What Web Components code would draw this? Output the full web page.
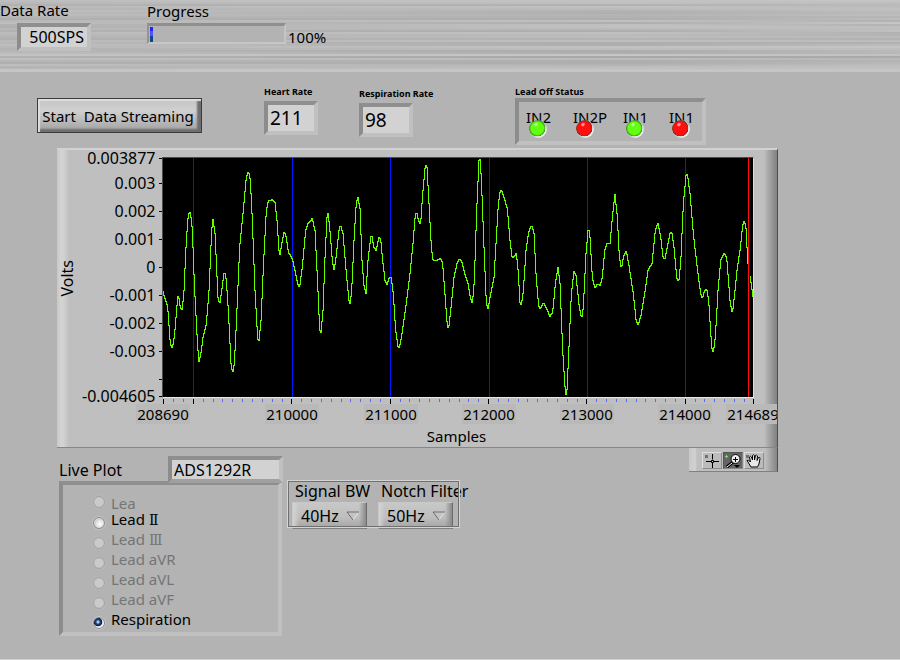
<!DOCTYPE html>
<html lang="en">
<head>
<meta charset="utf-8">
<title>ECG Live Plot</title>
<style>
html, body { margin: 0; }
body { background: #b3b3b3; color: #000; font: 15px/20px "Noto Sans", "Open Sans", "Noto Sans CJK SC", sans-serif; }
</style>
</head>
<body>
<ecg-app></ecg-app>
<script>
function define(name, html, setup) {
  customElements.define(name, class extends HTMLElement {
    constructor() {
      super();
      const t = document.createElement('template');
      t.innerHTML = '<style>*{box-sizing:border-box}</style>' + html;
      this.attachShadow({ mode: 'open' }).append(t.content.cloneNode(true));
    }
    connectedCallback() {
      if (setup && !this.ready) { this.ready = true; setup(this, this.shadowRoot); }
    }
  });
}

define('sunken-box', `<style>
:host { display: block; box-sizing: border-box; border: solid; border-width: 4px 4px 4px 4px;
  border-color: #8f8f8f #c0c0c0 #c0c0c0 #8c8c8c; background: var(--fill, #d2d2d2); }
</style><slot></slot>`);

define('brushed-header', `<style>
:host { display: flex; align-items: flex-start; height: 72px; box-sizing: border-box; border-bottom: 3px solid #c5c5c5; }
</style><slot></slot>`, host => {
  const rows = [
    [190,194,196],[184,192,190],[178,178,186],[186,192,188],[182,188,192],[190,178,190],[186,176,186],[188,180,190],
    [182,178,182],[176,174,188],[184,192,178],[190,174,198],[178,192,180],[176,194,190],[184,186,190],[178,174,192],
    [188,192,178],[184,186,180],[180,188,186],[176,180,178],[186,190,188],[184,174,178],[190,174,188],[184,194,196],
    [178,190,190],[182,172,186],[188,174,184],[194,198,194],[178,168,170],[190,188,184],[182,174,180],[176,174,184],
    [190,180,188],[180,190,192],[184,192,192]];
  const g = v => `rgb(${v},${v},${v})`;
  host.style.backgroundImage = rows.map(r => `linear-gradient(90deg,${g(r[0])},${g(r[1])} 70%,${g(r[2])})`).join();
  host.style.backgroundPosition = rows.map((r, i) => `0 ${i * 2}px`).join();
  host.style.backgroundSize = '100% 2px';
  host.style.backgroundRepeat = 'no-repeat';
});

define('top-bar', `<style>
:host { display: block; }
.rate { width: 91px; }
.rate sunken-box { margin: 3px 0 0 17px; height: 28px; text-align: right; padding-right: 3px; font-size: 16px; }
.prog { margin-left: 56px; padding-top: 1px; }
.line { display: flex; gap: 2px; }
progress { appearance: none; display: block; width: 139px; height: 21px; margin-top: 2px; padding: 1px 0 0 0;
  border: solid; border-width: 3px 2px 2px; border-color: #8f8f8f #c4c4c4 #c6c6c6 #939393; background: #b3b3b3; }
progress::-webkit-progress-bar { background: transparent; }
progress::-webkit-progress-value { background: linear-gradient(#2222ff 0 30%, #5050ff 30% 60%, #114488 60%);
  margin-left: 1px; height: 14px; }
output { padding-top: 6px; }
</style>
<brushed-header>
  <div class="rate"><label id="dr">Data Rate</label><sunken-box><output aria-labelledby="dr">500SPS</output></sunken-box></div>
  <div class="prog"><label for="p">Progress</label>
    <div class="line"><progress id="p" max="100" value="2"></progress><output>100%</output></div></div>
</brushed-header>`);

define('value-readout', `<style>
:host { display: block; }
.name { display: block; font-size: 9px; font-weight: 700; line-height: 12px; white-space: nowrap; height: 15px; }
sunken-box { width: 54px; height: 34px; padding-left: 2px; font-size: 19px; line-height: 27px; }
</style><span class="name" id="n"><slot></slot></span><sunken-box><output aria-labelledby="n"></output></sunken-box>`,
(h, r) => { r.querySelector('output').textContent = h.getAttribute('value'); });

define('status-led', `<style>
:host { display: flex; flex-direction: column; align-items: flex-start; }
i { width: 18px; height: 18px; margin: -7px 0 0 3px; border-radius: 50%; position: relative;
  background: radial-gradient(circle at 46% 46%, var(--c) 0 45%, var(--d) 58%, transparent 60%), linear-gradient(135deg, #909090 20%, #eee 80%); }
i::after { content: ""; position: absolute; left: 5px; top: 3px; width: 4px; height: 3px; border-radius: 50%; background: #fff8; transform: rotate(-40deg); }
:host([color=green]) { --c: #62ff10; --d: #3a9a10; }
:host([color=red]) { --c: #ff1010; --d: #903010; }
</style><span><slot></slot></span><i></i>`);

define('lead-status', `<style>
:host { display: block; }
.name { display: block; font-size: 9px; font-weight: 700; line-height: 12px; }
sunken-box { --fill: #b3b3b3; width: 191px; height: 47px; display: grid; grid-template-columns: 47px 50px 46px auto; padding: 5px 0 0 7px; }
</style><span class="name">Lead Off Status</span>
<sunken-box><status-led color="green">IN2</status-led><status-led color="red">IN2P</status-led><status-led color="green">IN1</status-led><status-led color="red">IN1</status-led></sunken-box>`);

define('stream-button', `<style>
:host { display: block; }
button { display: block; height: 35px; width: 165px; padding: 0 3px 0 0; font: inherit; color: inherit; white-space: pre; text-align: center;
  border: 1px solid #3c3c3c; background: linear-gradient(#c4c4c4, #d0d0d0 35%, #b0b0b0 80%, #9c9c9c);
  box-shadow: inset 2px 2px 1px #dedede, inset -4px -3px 2px #6e6e6e; }
</style><button type="button"><slot></slot></button>`);

define('wave-plot', `<style>
:host { display: block; }
svg { display: block; width: 100%; height: 241px; background: #000; border: 1px solid; border-color: #4c4c4c #ddd #e8e8e8 #4c4c4c; }
path { vector-effect: non-scaling-stroke; fill: none; stroke-width: 1px; stroke-linecap: square; shape-rendering: crispEdges; }
</style><svg viewBox="0 24 1770 717" preserveAspectRatio="none" role="img" aria-label="Respiration waveform">
<path id="grid" stroke="#0018ff"/><path id="wave" stroke="#66ff00"/><path d="M1756.500 24V741" stroke="#ff1010"/></svg>`, (h, r) => {
  const first = [0,424,5,440,14,468,22,580,28,592,34,560,44,440,47,436,52,474,57,476,62,440,70,270,76,190,82,184,88,235,94,400,104,590,108,632,113,615,120,560,130,520,138,420,146,240,150,208,156,250,165,440,170,462,176,420,184,360,190,390,196,480,204,640,209,667,214,640,220,520,230,290,240,190,250,80,257,62,262,90,268,210,276,420,284,565,288,570,294,510,302,330,310,180,316,152,328,148,336,156,342,210,348,300,351,312,356,280,364,242,370,260,376,305,388,325,398,370,406,408,410,408,418,350,428,240,434,220,442,212,448,204,456,240,464,400,470,540,474,545,480,480,486,320,492,200,495,190,500,230,508,330,513,358,518,330,528,240,532,222,540,250,550,370,558,450,562,463,
  567,400,573,270,579,170,584,136,591,175,597,330,603,405,609,428,615,330,623,260,626,254,633,290,639,300,648,260,653,265,659,330,666,390,672,402,679,380,685,382,691,430,698,540,705,588,709,592,717,550,727,480,741,370,749,290,757,190,762,188,767,213,773,220,779,130,787,42,792,50,798,160,805,290,810,328,821,330,833,323,839,340,845,420,853,525,857,534,863,480,873,380,883,335,890,324,897,335,907,375,915,400,923,445,928,460,934,390,941,180,948,30,952,26,956,110,963,290,970,460,975,475,983,430,993,380,999,280,1006,160,1012,120,1017,122,1025,148,1033,175,1041,270,1048,325,1053,318,1059,310,1064,340,1071,455,1075,465,1081,420,1089,300,1097,245,1105,224,1111,240,
  1113,250,1119,370,1127,468,1132,474,1141,456,1149,470,1161,498,1169,485,1177,400,1185,352,1191,400,1199,600,1207,725,1211,738,1217,610,1225,430,1233,362,1239,375,1249,470,1256,506,1261,470,1269,310,1276,228,1281,260,1288,380,1295,412,1304,400,1312,406,1318,380,1325,300,1331,280,1341,278,1349,190,1356,132,1363,200,1369,320,1375,354,1382,318,1390,302,1398,345,1411,430,1420,515,1426,522,1435,490,1445,430,1455,360,1467,338,1477,240,1485,218,1493,260,1500,318,1505,328,1513,290,1521,248,1526,243,1533,290,1541,380,1547,395,1553,340,1561,160,1569,75,1573,70,1581,130,1591,250,1605,370,1613,430,1618,444,1625,420,1631,414,1637,450,1646,590,1651,606,1657,560,1665,420,1673,330,1683,308,1691,320,1701,450,1708,490,1714,440,1723,350,1731,300,1739,225,1744,209,1750,240,1754,340];
  const last = [1761,378,1766,410,1770,438];
  // Sample-and-hold trace: one vertical run per sample column.
  const steps = p => {
    let d = `M${p[0] + 1.5} ${p[1]}`, k = 0;
    for (let x = p[0]; x < p[p.length - 2]; x += 3) {
      const c = x + 3;
      while (k < p.length - 4 && p[k + 2] < c) k += 2;
      const t = Math.min(1, (c - p[k]) / (p[k + 2] - p[k]));
      const y = Math.round((p[k + 1] + t * (p[k + 3] - p[k + 1])) / 3) * 3 + 1.5;
      d += `H${x + 1.5}V${y}`;
    }
    return d;
  };
  r.getElementById('wave').setAttribute('d', steps(first) + steps(last));
  r.getElementById('grid').setAttribute('d', [91.5,388.5,682.5,979.5,1273.5,1567.5].map(x => `M${x} 24V741`).join(''));
});

define('x-axis', `<style>
:host { display: block; }
svg { display: block; width: 100%; height: 5px; overflow: visible; }
path { vector-effect: non-scaling-stroke; stroke-width: 1px; shape-rendering: crispEdges; }
.labels { display: grid; grid-template-columns: 129fr 99fr 98fr 98fr 98fr 68fr 0; height: 20px; }
.labels div { width: 0; display: flex; justify-content: center; }
.labels span { background: #b9b9b9; padding: 0 1px; flex: none; }
</style><svg viewBox="0 0 5999 5" preserveAspectRatio="none"><path id="m" stroke="#5a64ff"/><path id="M" stroke="#000"/></svg>
<div class="labels"></div>`, (h, r) => {
  let minor = '', major = 'M5 0V5M5999 0V5';
  for (let n = 208700; n < 214689; n += 100) n % 1000 ? minor += `M${n - 208690} 0V3` : major += `M${n - 208690} 0V5`;
  r.getElementById('m').setAttribute('d', minor);
  r.getElementById('M').setAttribute('d', major);
  r.querySelector('.labels').innerHTML = [208690,210000,211000,212000,213000,214000,214689].map(n => `<div><span>${n}</span></div>`).join('');
});

define('y-axis', `<style>
:host { display: grid; grid-template-rows: 25px repeat(7, 28px) 17px 0; font-size: 16px; padding-right: 1px; }
div { height: 0; display: flex; align-items: center; justify-content: flex-end; gap: 3px; line-height: 20px; }
i { width: 5px; height: 1px; background: #000; }
</style>`, (h, r) => {
  for (const v of ['0.003877','0.003','0.002','0.001','0','-0.001','-0.002','-0.003','','-0.004605']) {
    const d = document.createElement('div');
    d.innerHTML = `<span>${v}</span><i></i>`;
    r.append(d);
  }
});

define('wave-chart', `<style>
:host { display: grid; grid-template-columns: 25px 80px 1fr 23px; height: 300px; overflow: hidden; padding-top: 9px; box-sizing: border-box;
  border-top: 2px solid #d2d2d2; border-bottom: 1px solid #868686; border-right: 1px solid #505050;
  background: linear-gradient(90deg, #c8c8c8, #d4d4d4 4px, #d0d0d0 7px, #bfbfbf 12px, #bfbfbf calc(100% - 13px), #aaa calc(100% - 9px), #808080); }
.volts { writing-mode: vertical-rl; transform: rotate(180deg); align-self: start; margin-top: 101px; width: 20px; justify-self: start; font-size: 16px; }
y-axis { margin-top: -1px; }
.mid { margin-top: -2px; }
.title { text-align: center; margin-top: 2px; padding-right: 3px; }
x-axis { margin: 1px 1px 0; }
</style><span class="volts">Volts</span><y-axis></y-axis>
<div class="mid"><wave-plot></wave-plot><x-axis></x-axis><div class="title">Samples</div></div>`);

define('graph-palette', `<style>
:host { display: flex; height: 24px; width: 89px; box-sizing: border-box; padding: 4px 0 0 13px; gap: 1px; border-bottom: 1px solid #808080; border-right: 1px solid #505050;
  background: linear-gradient(90deg, #c8c8c8, #d2d2d2 6px, #bfbfbf 8px, #bfbfbf 76px, #858585); }
button { width: 20px; height: 17px; padding: 0; border: solid 1px; border-color: #ddd #8c8c8c #8c8c8c #ddd; background: #bcbcbc; }
button.on { background: #646464; border-color: #555 #888 #888 #555; }
svg { display: block; width: 18px; height: 15px; }
</style>
<button type="button" aria-label="Cursor"><svg viewBox="0 0 18 15" fill="none" stroke="#000"><path d="M2 2h3v3H2z" fill="#687868" stroke="none"/><path d="M9.500 1v5.500M9.500 10v5M3 8.500h5M11 8.500h5"/><path d="M8.500 7.500h2v2h-2z"/></svg></button>
<button type="button" class="on" aria-label="Zoom"><svg viewBox="0 0 18 15" fill="none"><path d="M1 3.500h3M2.500 2v3" stroke="#54ff28"/><path d="M9 9L3 14" stroke="#000" stroke-width="3"/><path d="M8 10l-5 4" stroke="#fff"/><circle cx="11.500" cy="6" r="4.500" fill="#eee" stroke="#000"/><path d="M9 6.500h5M11.500 4v5" stroke="#000"/><path d="M10 12h6l-3 3z" fill="#000"/></svg></button>
<button type="button" aria-label="Pan"><svg viewBox="0 0 18 15"><path d="M1 2h3v3H1z" fill="#687868"/><path d="M6 14L3 9 2 7.500Q3.500 6.500 5 8.500L5.500 9 4.500 4Q5.500 2.500 6.500 4L7.500 7V2.500Q8.500 1 9.500 2.500V7L10.500 2.500Q11.500 1.500 12.500 3L12 7.500 13.500 4.500Q15 4 15 5.500L14 11 12.500 14z" fill="#e8e8e8" stroke="#000"/></svg></button>`);

define('lead-option', `<style>
:host { display: block; }
label { display: grid; grid-template-columns: 13px auto; column-gap: 5px; height: 20px; justify-content: start; }
span { margin-top: -2px; }
input { appearance: none; width: 12px; height: 12px; margin: 6px 0 0; border-radius: 50%; border: 1px solid #858585;
  background: radial-gradient(circle at 60% 60%, #fff, #ddd 50%, #d0d0d0 55%, #f0f0f0); outline: 1px solid #c4c4c4; }
input:disabled { border-color: #a0a0a0; background: radial-gradient(circle, #cacaca 50%, #bdbdbd); outline-color: #b8b8b8; }
input:disabled + span { color: #757575; }
input:checked { background: radial-gradient(circle at 40% 40%, #a9c8e8 0 10%, #1f4f85 25%, #0a1d40 45%, #eee 55%); }
:host([raised]) input { margin-top: 2px; }
:host([raised]) span { margin-top: 0; line-height: 18px; }
:host([raised]) label { height: 17px; }
</style><label><input type="radio"><span><slot></slot></span></label>`, (h, r) => {
  const i = r.querySelector('input');
  i.disabled = h.hasAttribute('disabled');
  i.checked = h.hasAttribute('checked');
});

define('live-plot', `<style>
:host { display: block; width: 226px; }
.top { display: flex; height: 25px; font-size: 16px; }
.top > label { width: 109px; padding: 4px 0 0; }
input { width: 115px; height: 27px; padding: 1px 0 0 2px; border-radius: 0; font: inherit; outline: 0; position: relative;
  border: 4px solid; border-color: #8f8f8f #c0c0c0 #a0a0a0 #8c8c8c; background: #d2d2d2; }
sunken-box { --fill: #b3b3b3; height: 155px; width: 223px; padding: 9px 0 0 30px; }
.roman { font-family: "DejaVu Serif", "Noto Sans CJK SC", serif; font-size: 14px; line-height: 16px; }
</style>
<div class="top"><label for="d">Live Plot</label><input id="d" value="ADS1292R"></div>
<sunken-box role="radiogroup"><lead-option raised disabled>Lea</lead-option><lead-option>Lead <span class="roman">Ⅱ</span></lead-option><lead-option disabled>Lead <span class="roman">Ⅲ</span></lead-option>
<lead-option disabled>Lead aVR</lead-option><lead-option disabled>Lead aVL</lead-option><lead-option disabled>Lead aVF</lead-option><lead-option checked>Respiration</lead-option></sunken-box>`);

define('filter-select', `<style>
:host { display: block; width: 75px; }
label { display: block; padding: 1px 0 0 3px; white-space: nowrap; line-height: 20px; }
.wrap { display: grid; margin-top: 1px; }
.wrap > * { grid-area: 1 / 1; }
select { appearance: none; width: 75px; height: 27px; padding: 1px 0 0 8px; border: 1px solid; border-color: #c8c8c8 #6c6c6c #808080 #c8c8c8; border-radius: 0; font: inherit; color: #000;
  background: linear-gradient(90deg, #d4d4d4, #0000 6px, #0000 66px, #8a8a8a), linear-gradient(#c8c8c8, #bdbdbd 60%, #a4a4a4); }
svg { width: 14px; height: 10px; justify-self: end; align-self: center; margin-right: 7px; pointer-events: none; }
</style><label for="s"><slot></slot></label><div class="wrap"><select id="s"><option></option></select>
<svg viewBox="0 0 14 10"><path d="M1 1h12L7 9z" fill="#c4c4c4" stroke="#e4e4e4"/><path d="M13 1H1L7 9" fill="none" stroke="#606060"/></svg></div>`,
(h, r) => { r.querySelector('option').textContent = h.getAttribute('value'); });

define('filter-group', `<style>
:host { display: flex; gap: 11px; width: 173px; height: 48px; box-sizing: border-box; padding-left: 5px; position: relative; }
:host::after { content: ""; position: absolute; inset: 0; border: 1px solid #d4d4d4; box-shadow: inset 0 0 0 1px #707070; pointer-events: none; }
</style><filter-select value="40Hz">Signal BW</filter-select><filter-select value="50Hz">Notch Filter</filter-select>`);

define('ecg-app', `<style>
:host { display: flex; flex-direction: column; min-height: 100vh; box-sizing: border-box; border-bottom: 1px solid #d0d0d0; }
.controls { display: flex; align-items: flex-start; height: 76px; padding: 14px 0 0 37px; }
stream-button { margin: 12px 62px 0 0; }
value-readout { width: 95px; }
value-readout + value-readout { margin-top: 2px; width: 156px; }
main { padding: 0 122px 0 57px; }
.bottom { display: flex; align-items: flex-start; }
live-plot { margin: 8px 2px 0 2px; }
filter-group { margin-top: 32px; font-size: 16px; }
graph-palette { margin-left: auto; }
</style>
<top-bar></top-bar>
<section class="controls"><stream-button>Start  Data Streaming</stream-button>
<value-readout value="211">Heart Rate</value-readout><value-readout value="98">Respiration Rate</value-readout><lead-status></lead-status></section>
<main><wave-chart></wave-chart><div class="bottom"><live-plot></live-plot><filter-group></filter-group><graph-palette></graph-palette></div></main>`);
</script>
</body>
</html>
